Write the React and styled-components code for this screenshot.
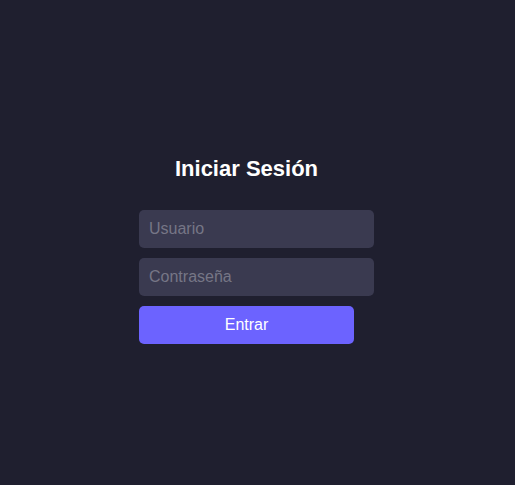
import React from "react";
import styled, { createGlobalStyle } from "styled-components";

const Global = createGlobalStyle`
  html, body { margin: 0; padding: 0; background: #1e1e2e; }
  body { font-family: "Liberation Sans", Arial, sans-serif; }
`;

const Page = styled.div`
  height: 485px;
  display: flex;
  align-items: center;
  justify-content: center;
  background: #1f1f2f;
`;

const Card = styled.form`
  width: 215px;
  margin-right: 22px;
  margin-top: 14px;
  display: flex;
  flex-direction: column;
  gap: 10px;
`;

const Title = styled.h2`
  margin: 0 0 18px;
  font-size: 22px;
  font-weight: bold;
  color: #ffffff;
  text-align: center;
  line-height: normal;
`;

const Field = styled.input`
  box-sizing: content-box;
  width: 100%;
  padding: 10px;
  margin: 0;
  border: none;
  border-radius: 5px;
  background: #3a3a50;
  color: #ffffff;
  font-family: "Liberation Sans", Arial, sans-serif;
  font-size: 16px;
  line-height: normal;
  outline: none;
  &::placeholder { color: #767686; }
`;

const Button = styled.button`
  box-sizing: border-box;
  width: 100%;
  height: 38px;
  padding: 0;
  border: none;
  border-radius: 5px;
  background: #6c63ff;
  color: #ffffff;
  font-family: "Liberation Sans", Arial, sans-serif;
  font-size: 16px;
  cursor: pointer;
`;

export default function App() {
  return (
    <>
      <Global />
      <Page>
        <Card onSubmit={(e) => e.preventDefault()}>
          <Title>Iniciar Sesión</Title>
          <Field type="text" placeholder="Usuario" />
          <Field type="password" placeholder="Contraseña" />
          <Button type="submit">Entrar</Button>
        </Card>
      </Page>
    </>
  );
}
